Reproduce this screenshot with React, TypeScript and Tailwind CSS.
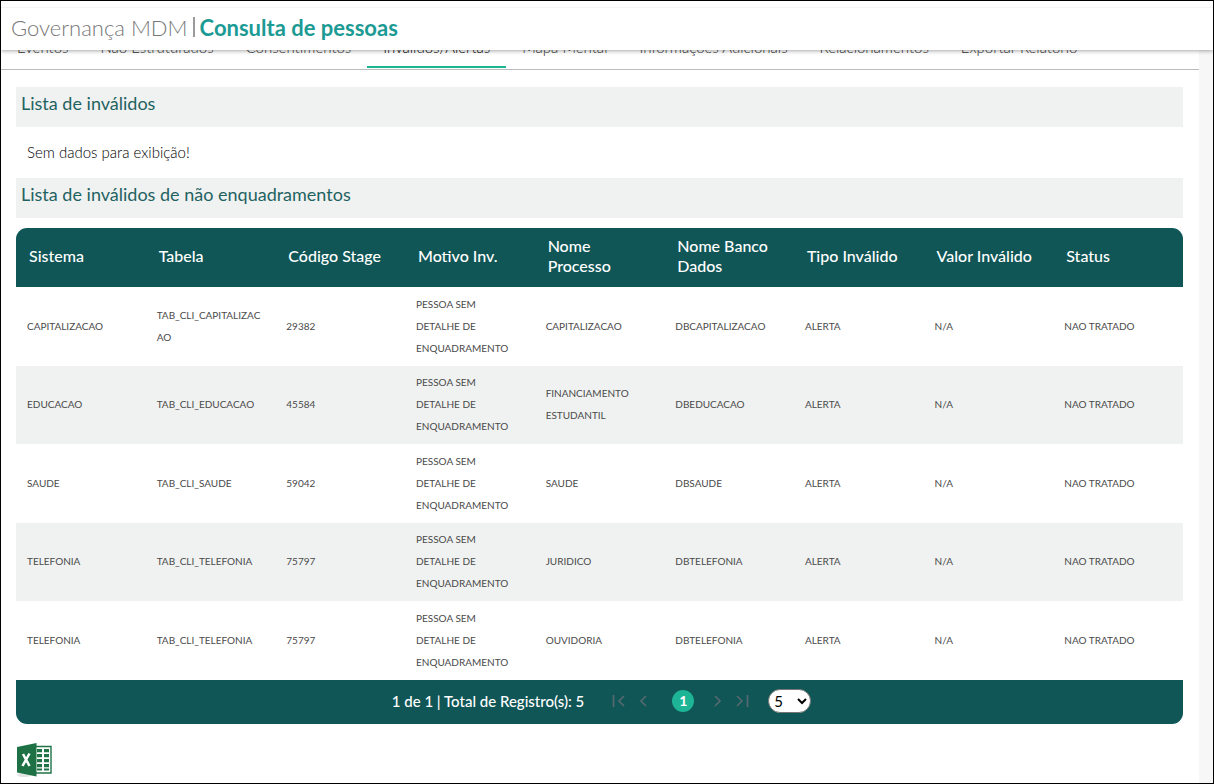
import { useState } from "react";

const tabs = [
  "Eventos",
  "Não Estruturados",
  "Consentimentos",
  "Inválidos/Alertas",
  "Mapa Mental",
  "Informações Adicionais",
  "Relacionamentos",
  "Exportar Relatório",
];

const columns = [
  "Sistema",
  "Tabela",
  "Código Stage",
  "Motivo Inv.",
  "Nome Processo",
  "Nome Banco Dados",
  "Tipo Inválido",
  "Valor Inválido",
  "Status",
];

const motivo = "PESSOA SEM DETALHE DE ENQUADRAMENTO";

const rows = [
  ["CAPITALIZACAO", "TAB_CLI_CAPITALIZACAO", "29382", motivo, "CAPITALIZACAO", "DBCAPITALIZACAO", "ALERTA", "N/A", "NAO TRATADO"],
  ["EDUCACAO", "TAB_CLI_EDUCACAO", "45584", motivo, "FINANCIAMENTO ESTUDANTIL", "DBEDUCACAO", "ALERTA", "N/A", "NAO TRATADO"],
  ["SAUDE", "TAB_CLI_SAUDE", "59042", motivo, "SAUDE", "DBSAUDE", "ALERTA", "N/A", "NAO TRATADO"],
  ["TELEFONIA", "TAB_CLI_TELEFONIA", "75797", motivo, "JURIDICO", "DBTELEFONIA", "ALERTA", "N/A", "NAO TRATADO"],
  ["TELEFONIA", "TAB_CLI_TELEFONIA", "75797", motivo, "OUVIDORIA", "DBTELEFONIA", "ALERTA", "N/A", "NAO TRATADO"],
];

const SectionTitle = ({ children }: { children: string }) => (
  <h2 className="h-10 bg-[#f0f2f1] px-[5px] pt-1 text-[18px] leading-6 text-[#1f6262]">
    {children}
  </h2>
);

const PageButton = ({ label, d }: { label: string; d: string }) => (
  <button aria-label={label} className="flex h-6 w-6 items-center justify-center">
    <svg width="14" height="14" viewBox="0 0 14 14" fill="none" stroke="#546a70" strokeWidth="1.7">
      <path d={d} />
    </svg>
  </button>
);

const ExcelIcon = () => (
  <svg width="36" height="36" viewBox="0 0 36 36">
    <ellipse cx="8" cy="33" rx="7" ry="2" fill="#e4e4e4" />
    <path d="M18 4.500h17v26.500H18z" fill="#fff" stroke="#217346" strokeWidth="1.400" />
    <path
      d="M21 7h5v3.200h-5zM28 7h5v3.200h-5zM21 12h5v3.200h-5zM28 12h5v3.200h-5zM21 17h5v3.200h-5zM28 17h5v3.200h-5zM21 22h5v3.200h-5zM28 22h5v3.200h-5zM21 26.500h5v2h-5zM28 26.500h5v2h-5z"
      fill="#217346"
    />
    <path d="M1 5 20.500 1v33.500L1 30.500z" fill="#1e7145" />
    <path d="m7 12 6.500 12M13.500 11.500 6.500 24" stroke="#fff" strokeWidth="2.500" />
  </svg>
);

function App() {
  const [active, setActive] = useState("Inválidos/Alertas");
  const [pageSize, setPageSize] = useState("5");

  return (
    <div className="flex min-h-screen flex-col border border-black bg-[#f7f7f7] font-['Lato',sans-serif]">
      {/* header */}
      <header className="relative z-10 bg-white pt-[6px] shadow-[0_1px_4px_rgba(0,0,0,0.35)]">
        <h1 className="flex h-[43px] items-center border-t border-[#f5f5f5] px-[10px] pb-1 text-[22px] font-light text-[#777777]">
          Governança MDM
          <span className="mx-[5px] h-5 w-[2px] bg-[#9b9b9b]" />
          <span className="font-bold text-[#1c9a94]">Consulta de pessoas</span>
        </h1>
      </header>

      <main className="mr-[14px] flex-1 bg-white">
        {/* tabs: the strip is scrolled partly under the header */}
        <nav className="-mt-4 flex h-9 border-b border-[#b9bcbb] text-[15px] font-light text-[#333333]">
          {tabs.map((tab) => (
            <button
              key={tab}
              onClick={() => setActive(tab)}
              className={
                tab === active
                  ? "h-[34px] whitespace-nowrap border-b-2 border-[#1eb496] px-4 pb-[6px] text-black"
                  : "h-[34px] whitespace-nowrap border-b-2 border-transparent px-4 pb-[6px]"
              }
            >
              {tab}
            </button>
          ))}
        </nav>

        <div className="pt-[17px] pr-4 pl-[15px]">
          <SectionTitle>Lista de inválidos</SectionTitle>
          <p className="px-[11px] pt-[15px] pb-4 text-[15px] leading-5 font-light text-black">
            Sem dados para exibição!
          </p>
          <SectionTitle>Lista de inválidos de não enquadramentos</SectionTitle>

          <div className="mt-[10px] overflow-hidden rounded-[11px] bg-[#105656]">
            <table className="w-full table-fixed border-collapse text-left">
              <thead>
                <tr className="h-[59px] text-white">
                  {columns.map((column) => (
                    <th key={column} className="px-[13px] pb-[3px] text-[16px] leading-5 font-medium">
                      {column}
                    </th>
                  ))}
                </tr>
              </thead>
              <tbody className="text-[10px] leading-[22px] text-[#4a4a4a]">
                {rows.map((row, idx) => (
                  <tr key={idx} className="odd:h-[79px] odd:bg-white even:h-[78px] even:bg-[#f0f2f1]">
                    {row.map((cell, i) => (
                      <td key={i} className="pr-[13px] pb-[2px] pl-[11px] wrap-break-word">
                        {cell}
                      </td>
                    ))}
                  </tr>
                ))}
              </tbody>
            </table>

            {/* pagination */}
            <div className="flex h-11 items-center justify-center pb-[2px] pl-1 text-[15px] text-white">
              <span className="mr-[23px] font-medium">1 de 1 | Total de Registro(s): 5</span>
              <PageButton label="Primeira" d="M1.500 1v12M12 2 7 7l5 5" />
              <PageButton label="Anterior" d="M10 2 5 7l5 5" />
              <button className="mr-3 ml-[17px] h-[22px] w-[22px] rounded-full bg-[#1eb496] text-[14px] leading-5 font-bold">
                1
              </button>
              <PageButton label="Próxima" d="M4 2l5 5-5 5" />
              <PageButton label="Última" d="M2 2l5 5-5 5M12.500 1v12" />
              <select
                aria-label="Registros por página"
                value={pageSize}
                onChange={(e) => setPageSize(e.currentTarget.value)}
                className="ml-[14px] h-6 w-[43px] rounded-full border border-[#767676] bg-white pl-[1px] text-[15px] text-black"
              >
                <option>5</option>
                <option>10</option>
                <option>20</option>
              </select>
            </div>
          </div>

          <button aria-label="Exportar para Excel" className="mt-[18px] block">
            <ExcelIcon />
          </button>
        </div>
      </main>
    </div>
  );
}

export default App;
